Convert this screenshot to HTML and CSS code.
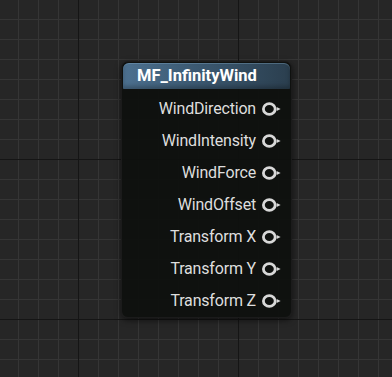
FILE: index.html
```html
<!DOCTYPE html>
<html>
<head>
<meta charset="utf-8">
<link rel="stylesheet" href="styles.css">
</head>
<body>
<div class="canvas">
  <div class="node">
    <div class="header">MF_InfinityWind</div>
    <div class="pins">
      <div class="pin"><span class="label">WindDirection</span><svg class="icon" viewBox="0 0 19 16" width="19" height="16"><ellipse cx="7.3" cy="8" rx="5.9" ry="5.4" fill="none" stroke="#d8d8d8" stroke-width="2.8"/><polygon points="14.6,6 18.6,8 14.6,10" fill="#d8d8d8"/></svg></div>
      <div class="pin"><span class="label">WindIntensity</span><svg class="icon" viewBox="0 0 19 16" width="19" height="16"><ellipse cx="7.3" cy="8" rx="5.9" ry="5.4" fill="none" stroke="#d8d8d8" stroke-width="2.8"/><polygon points="14.6,6 18.6,8 14.6,10" fill="#d8d8d8"/></svg></div>
      <div class="pin"><span class="label">WindForce</span><svg class="icon" viewBox="0 0 19 16" width="19" height="16"><ellipse cx="7.3" cy="8" rx="5.9" ry="5.4" fill="none" stroke="#d8d8d8" stroke-width="2.8"/><polygon points="14.6,6 18.6,8 14.6,10" fill="#d8d8d8"/></svg></div>
      <div class="pin"><span class="label">WindOffset</span><svg class="icon" viewBox="0 0 19 16" width="19" height="16"><ellipse cx="7.3" cy="8" rx="5.9" ry="5.4" fill="none" stroke="#d8d8d8" stroke-width="2.8"/><polygon points="14.6,6 18.6,8 14.6,10" fill="#d8d8d8"/></svg></div>
      <div class="pin"><span class="label">Transform X</span><svg class="icon" viewBox="0 0 19 16" width="19" height="16"><ellipse cx="7.3" cy="8" rx="5.9" ry="5.4" fill="none" stroke="#d8d8d8" stroke-width="2.8"/><polygon points="14.6,6 18.6,8 14.6,10" fill="#d8d8d8"/></svg></div>
      <div class="pin"><span class="label">Transform Y</span><svg class="icon" viewBox="0 0 19 16" width="19" height="16"><ellipse cx="7.3" cy="8" rx="5.9" ry="5.4" fill="none" stroke="#d8d8d8" stroke-width="2.8"/><polygon points="14.6,6 18.6,8 14.6,10" fill="#d8d8d8"/></svg></div>
      <div class="pin"><span class="label">Transform Z</span><svg class="icon" viewBox="0 0 19 16" width="19" height="16"><ellipse cx="7.3" cy="8" rx="5.9" ry="5.4" fill="none" stroke="#d8d8d8" stroke-width="2.8"/><polygon points="14.6,6 18.6,8 14.6,10" fill="#d8d8d8"/></svg></div>
    </div>
  </div>
</div>
</body>
</html>
```
FILE: styles.css
```css
html, body {
  margin: 0;
  padding: 0;
  width: 100%;
  height: 100%;
}
body {
  font-family: Roboto, "Liberation Sans", sans-serif;
}
.canvas {
  position: relative;
  width: 100%;
  height: 100%;
  overflow: hidden;
  background-color: #262626;
  background-image:
    linear-gradient(to right, #151515 1px, transparent 1px),
    linear-gradient(to bottom, #151515 1px, transparent 1px),
    linear-gradient(to right, #353535 1px, transparent 1px),
    linear-gradient(to bottom, #353535 1px, transparent 1px);
  background-size: 160px 100%, 100% 160px, 20px 20px, 20px 20px;
  background-position: 78px 0, 0 159px, 18px 0, 0 19px;
}
.node {
  position: absolute;
  left: 121px;
  top: 61px;
  width: 171px;
  height: 257px;
  box-sizing: border-box;
  border-radius: 7px;
  background: rgba(14, 16, 14, 0.93);
  border: 1px solid #1b1b1b;
  box-shadow: 0 2px 6px rgba(0, 0, 0, 0.6);
  padding: 1px;
  display: flex;
  flex-direction: column;
}
.header {
  height: 26px;
  border-radius: 6px 6px 1px 1px;
  background: linear-gradient(to right, #4d7190 0%, #3d5b74 40%, #2b3f4f 100%);
  box-shadow: inset 0 1px 0 rgba(140, 180, 210, 0.35), inset 0 -3px 4px rgba(0, 0, 0, 0.25);
  color: #ffffff;
  font-weight: bold;
  font-size: 16.5px;
  line-height: 26px;
  padding-left: 14px;
}
.pins {
  padding-top: 3px;
  display: flex;
  flex-direction: column;
}
.pin {
  height: 32px;
  display: flex;
  align-items: center;
  justify-content: flex-end;
  padding-right: 9px;
}
.label {
  color: #dedede;
  font-size: 16px;
  letter-spacing: -0.18px;
  margin-right: 6px;
}
.icon {
  display: block;
  margin-top: 2px;
}
```
